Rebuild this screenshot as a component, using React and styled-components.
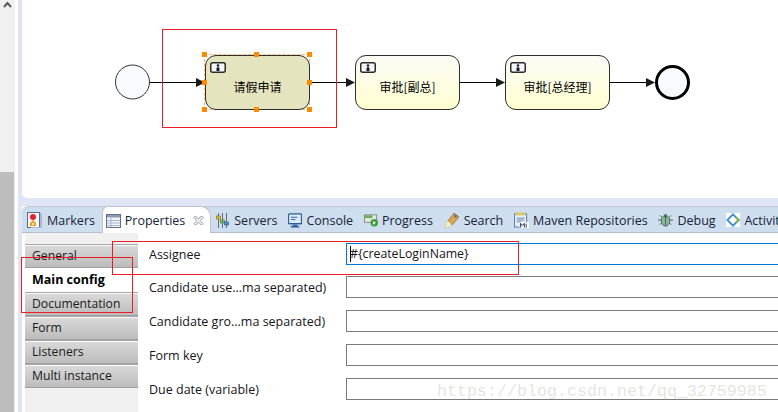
import React from 'react';
import styled, { createGlobalStyle } from 'styled-components';

const UI_FONT = `"Open Sans", "Noto Sans", "Noto Sans CJK SC", sans-serif`;

const GlobalStyle = createGlobalStyle`
  html, body { margin: 0; padding: 0; background: #ffffff; }
  * { box-sizing: border-box; }
`;

/* ---------- tab icons ---------- */
const MarkersIcon = () => (
  <svg width="16" height="17" viewBox="0 0 16 17">
    <rect x="0.5" y="0.5" width="12" height="15" fill="#f4f6fa" stroke="#5b6a8c" />
    <path d="M13 1h2v15H4v-1h9z" fill="#aeb9d2" />
    <circle cx="6" cy="5" r="3" fill="#e2242c" />
    <path d="M3 14v-3l3-3 3 3v3z" fill="#f0a020" />
    <rect x="5" y="11" width="2" height="2" fill="#fff3c0" />
  </svg>
);
const PropertiesIcon = () => (
  <svg width="15" height="14" viewBox="0 0 15 14">
    <rect x="0.5" y="0.5" width="14" height="13" fill="#f3f5f9" stroke="#5f6f90" />
    <rect x="1" y="1" width="13" height="2.5" fill="#8c9ab8" />
    <path d="M1 6.5h13M1 9h13M1 11.5h13M5 4v9" stroke="#a9b4ca" strokeWidth="1" />
  </svg>
);
const ServersIcon = () => (
  <svg width="14" height="15" viewBox="0 0 14 15">
    <path d="M2.5 0v15M6.5 0v15M10.5 0v15" stroke="#5f6b78" strokeWidth="1" />
    <rect x="0.5" y="3" width="4" height="3" fill="#e2b92c" stroke="#7a6a20" strokeWidth="0.6" />
    <rect x="4.5" y="7" width="4" height="3" fill="#7ab648" stroke="#48702a" strokeWidth="0.6" />
    <rect x="8.5" y="9" width="4" height="3" fill="#4b8ed0" stroke="#2a5a8c" strokeWidth="0.6" />
  </svg>
);
const ConsoleIcon = () => (
  <svg width="14" height="15" viewBox="0 0 15 15">
    <rect x="0.5" y="0.5" width="14" height="10.5" rx="1" fill="#dfe8f4" stroke="#2c5f9e" strokeWidth="1.4" />
    <path d="M3 4h7M3 6.5h5" stroke="#2c5f9e" strokeWidth="1" />
    <path d="M5 12h5v1.5h2V15H3v-1.500h2z" fill="#2c5f9e" />
  </svg>
);
const ProgressIcon = () => (
  <svg width="14" height="14" viewBox="0 0 15 14">
    <rect x="0.5" y="1.5" width="13" height="8" fill="#e4e8e4" stroke="#7f8a80" />
    <rect x="1" y="2" width="8" height="3" fill="#6fae55" />
    <circle cx="11" cy="10" r="4" fill="#3f9e3c" />
    <path d="M9.700 8l3 2-3 2z" fill="#ffffff" />
  </svg>
);
const SearchIcon = () => (
  <svg width="16" height="17" viewBox="0 0 16 17">
    <path d="M10 1l5 4-7 8-4-4z" fill="#d9a654" stroke="#94692c" strokeWidth="0.8" />
    <circle cx="11.500" cy="4" r="1.500" fill="#5b6f8c" />
    <path d="M4 9l4 4-2 2-5 1 1-5z" fill="#f4ecc0" stroke="#c8bf90" strokeWidth="0.6" />
  </svg>
);
const MavenIcon = () => (
  <svg width="15" height="17" viewBox="0 0 16 17">
    <rect x="0.5" y="1.500" width="13" height="14" fill="#e4ecf6" stroke="#5878a4" />
    <rect x="2" y="0" width="10" height="3" fill="#d9c95c" />
    <path d="M3 6h8M3 8h8M3 10h5" stroke="#6c88b0" strokeWidth="1" />
    <rect x="6" y="10.500" width="10" height="6" fill="#ffffff" />
    <path d="M7 16v-4.500l2 2.500 2-2.500V16M13 12v4" stroke="#24344c" strokeWidth="1" fill="none" />
  </svg>
);
const DebugIcon = () => (
  <svg width="15" height="16" viewBox="0 0 16 16">
    <path d="M2 3l3 3M14 3l-3 3M0 8h4M12 8h4M2 13l3-3M14 13l-3-3" stroke="#3c5a50" strokeWidth="1" />
    <ellipse cx="8" cy="9" rx="4.500" ry="5.500" fill="#8fb89a" stroke="#3f6a55" />
    <circle cx="8" cy="3.500" r="2" fill="#4d7a64" />
    <path d="M8 4v10" stroke="#2f5444" strokeWidth="0.8" />
  </svg>
);
const ActivitiIcon = () => (
  <svg width="14" height="16" viewBox="0 0 16 16">
    <rect width="16" height="16" fill="#ffffff" />
    <path d="M8 1.500L14.500 8 8 14.500 1.500 8z" fill="none" stroke="#3f8fd0" strokeWidth="2.200" />
    <path d="M11.500 5L14.500 8 11.500 11" fill="none" stroke="#78b84c" strokeWidth="2.200" />
  </svg>
);
const CloseGlyph = () => (
  <svg width="11" height="11" viewBox="0 0 11 11">
    <path
      d="M1 2.500L2.500 1 5.500 4 8.500 1 10 2.500 7 5.500 10 8.500 8.500 10 5.500 7 2.500 10 1 8.500 4 5.500z"
      fill="#ffffff"
      stroke="#8a8f98"
      strokeWidth="1"
    />
  </svg>
);

const tabs = [
  { label: 'Markers', Icon: MarkersIcon },
  { label: 'Properties', Icon: PropertiesIcon, active: true },
  { label: 'Servers', Icon: ServersIcon },
  { label: 'Console', Icon: ConsoleIcon },
  { label: 'Progress', Icon: ProgressIcon },
  { label: 'Search', Icon: SearchIcon },
  { label: 'Maven Repositories', Icon: MavenIcon },
  { label: 'Debug', Icon: DebugIcon },
  { label: 'Activiti', Icon: ActivitiIcon },
];

const sections = [
  { label: 'General' },
  { label: 'Main config', active: true },
  { label: 'Documentation' },
  { label: 'Form' },
  { label: 'Listeners' },
  { label: 'Multi instance' },
];

const fields = [
  { label: 'Assignee', value: '#{createLoginName}', focused: true },
  { label: 'Candidate use...ma separated)' },
  { label: 'Candidate gro...ma separated)' },
  { label: 'Form key' },
  { label: 'Due date (variable)' },
];

const handles = [
  [204, 54], [256, 54], [309, 54],
  [204, 82], [309, 82],
  [204, 109], [256, 109], [309, 109],
];

const TaskMarker = () => (
  <svg width="16" height="11" viewBox="0 0 16 11">
    <rect x="0.75" y="0.75" width="14.5" height="9.5" rx="2" fill="#f4f8fc" stroke="#2a2a2a" strokeWidth="1.5" />
    <circle cx="8" cy="3.500" r="1.300" fill="#1c1c1c" />
    <path d="M6.500 9V6l.8-.8h1.400l.8.8v3z" fill="#1c1c1c" />
  </svg>
);

const App = () => (
  <Page>
    <GlobalStyle />
    <ScrollRail>
      <ScrollUp>
        <svg width="9" height="7" viewBox="0 0 9 7">
          <path d="M1 6l3.500-4L8 6" fill="none" stroke="#5a5a5a" strokeWidth="2" />
        </svg>
      </ScrollUp>
      <ScrollThumb />
    </ScrollRail>

    <Workbench>
      <Canvas>
        <Wires width="756" height="198" viewBox="22 0 756 198">
          <circle cx="132.500" cy="82" r="17" fill="#f8faff" stroke="#333333" strokeWidth="1" />
          <circle cx="672.500" cy="82.500" r="16" fill="#f8faff" stroke="#000000" strokeWidth="3" />
          <path d="M150 82.500H198M310 82.500H348M459 82.500H498M609 82.500H648" stroke="#000000" strokeWidth="1" />
          <path d="M196 78l9 4.500-9 4.500zM346 78l9 4.500-9 4.500zM496 78l9 4.500-9 4.500zM646 78l9 4.500-9 4.500z" fill="#1a1a1a" />
        </Wires>

        <SelectionBox />
        <Task $x={205} $selected>
          <TaskIcon><TaskMarker /></TaskIcon>
          请假申请
        </Task>
        <Task $x={355}>
          <TaskIcon><TaskMarker /></TaskIcon>
          审批[副总]
        </Task>
        <Task $x={505}>
          <TaskIcon><TaskMarker /></TaskIcon>
          审批[总经理]
        </Task>
        {handles.map(([x, y]) => (
          <Handle key={`${x}-${y}`} $x={x} $y={y} />
        ))}
      </Canvas>

      <TabFolder>
        <TabBar>
          {tabs.map(({ label, Icon, active }) => (
            <Tab key={label} $active={active}>
              <Icon />
              <TabLabel>{label}</TabLabel>
              {active && <CloseSlot><CloseGlyph /></CloseSlot>}
            </Tab>
          ))}
        </TabBar>

        <Body>
          <Sidebar>
            {sections.map(({ label, active }) => (
              <SectionTab key={label} $active={active}>{label}</SectionTab>
            ))}
          </Sidebar>

          <Form>
            {fields.map(({ label, value, focused }) => (
              <FormRow key={label} $focused={focused}>
                <FieldLabel>{label}</FieldLabel>
                <Field $focused={focused}>
                  {focused && <Caret />}
                  {value}
                </Field>
              </FormRow>
            ))}
          </Form>
        </Body>
      </TabFolder>
    </Workbench>

    <Annotation $x={162} $y={29} $w={175} $h={99} />
    <Annotation $x={112} $y={241} $w={407} $h={34} />
    <Annotation $x={21} $y={257} $w={112} $h={56} />
    <Watermark>https://blog.csdn.net/qq_32759985</Watermark>
  </Page>
);

const Page = styled.div`
  position: relative;
  display: flex;
  width: 778px;
  height: 412px;
  overflow: hidden;
  background: #ffffff;
  font-family: ${UI_FONT};
`;

const ScrollRail = styled.div`
  display: flex;
  flex-direction: column;
  flex: none;
  width: 15px;
  margin-right: 3px;
  background: #f0f0f0;
`;

const ScrollUp = styled.div`
  display: flex;
  justify-content: center;
  align-items: flex-start;
  height: 172px;
  line-height: 0;
  padding-top: 1px;
`;

const ScrollThumb = styled.div`
  flex: 1;
  width: 14px;
  background: #bdbdbd;
`;

const Workbench = styled.div`
  flex: 1;
  min-width: 0;
  display: flex;
  flex-direction: column;
  padding-left: 4px;
  background: #dfe5f5;
`;

const Canvas = styled.div`
  position: relative;
  flex: none;
  height: 198px;
  margin-bottom: 8px;
  background: #ffffff;
  border-bottom-left-radius: 5px;
`;

const Wires = styled.svg`
  position: absolute;
  left: 0;
  top: 0;
`;

const SelectionBox = styled.div`
  position: absolute;
  left: 182px;
  top: 54px;
  width: 106px;
  height: 56px;
  border: 1px dashed #ffb874;
`;

const Task = styled.div`
  position: absolute;
  left: ${(p) => p.$x - 22}px;
  top: 55px;
  width: 105px;
  height: 55px;
  padding-top: 7px;
  display: flex;
  align-items: center;
  justify-content: center;
  border: 1px solid #2e2e2e;
  border-radius: 11px;
  background: ${(p) => (p.$selected ? '#e4e4bf' : 'linear-gradient(180deg, #fbfbf6 0%, #fffed0 100%)')};
  color: #000000;
  font-family: "Noto Sans CJK SC", sans-serif;
  font-size: 12px;
`;

const TaskIcon = styled.span`
  position: absolute;
  left: 4px;
  top: 6px;
  line-height: 0;
`;

const Handle = styled.span`
  position: absolute;
  left: ${(p) => p.$x - 24}px;
  top: ${(p) => p.$y - 2}px;
  width: 5px;
  height: 5px;
  background: #ff8a00;
`;

const TabFolder = styled.div`
  flex: 1;
  min-height: 0;
  display: flex;
  flex-direction: column;
  background: #ffffff;
`;

const TabBar = styled.div`
  flex: none;
  display: flex;
  height: 27px;
  border-top: 1px solid #c5c9d8;
  border-bottom: 1px solid #b7bdcb;
  border-top-left-radius: 6px;
  background: #cfdeee;
  white-space: nowrap;
`;

const Tab = styled.div`
  flex: none;
  display: flex;
  align-items: center;
  gap: 4px;
  height: 25px;
  padding: 1px 5.8px 0 5px;
  ${(p) =>
    p.$active &&
    `
    margin: -1px 0 -1px 1px;
    height: 27px;
    padding: 1px 6px 0 3px;
    background: #ffffff;
    border: 1px solid #bcc2cf;
    border-bottom: none;
    border-radius: 6px 10px 0 0;
  `}
  color: #15233a;
  font-size: 12.5px;
  line-height: 1;
  svg { flex: none; }
`;

const TabLabel = styled.span`
  display: block;
  padding-top: 2px;
`;

const CloseSlot = styled.span`
  display: flex;
  margin-left: 4px;
`;

const Body = styled.div`
  flex: 1;
  min-height: 0;
  display: flex;
  padding-left: 3px;
`;

const Sidebar = styled.div`
  flex: none;
  width: 113px;
  padding-top: 11px;
  background: #f0f0f0;
`;

const SectionTab = styled.div`
  display: flex;
  align-items: center;
  height: 24px;
  padding: 0 0 1px 7px;
  color: #1a1a1a;
  font-size: 12.2px;
  ${(p) =>
    p.$active
      ? `
    background: #ffffff;
    color: #000000;
    font-weight: 700;
    font-size: 12.5px;
  `
      : `
    background: linear-gradient(180deg, #dadada 0%, #bcbcbc 100%);
    border-top: 1px solid #a8a8a8;
    box-shadow: inset 0 1px 0 #f8f8f8;
    border-bottom: 1px solid #a0a0a0;
  `}
`;

const Form = styled.div`
  flex: 1;
  min-width: 0;
  display: flex;
  flex-direction: column;
  gap: 12px;
  padding: 10px 0 0 11px;
  overflow: hidden;
`;

const FormRow = styled.div`
  flex: none;
  display: flex;
  align-items: center;
  height: 22px;
  margin-bottom: ${(p) => (p.$focused ? '-1px' : '0')};
`;

const FieldLabel = styled.span`
  flex: none;
  width: 197px;
  color: #15151a;
  font-size: 12.5px;
  white-space: nowrap;
`;

const Field = styled.div`
  position: relative;
  flex: none;
  width: 440px;
  height: 22px;
  padding-left: 3px;
  line-height: 20px;
  border: 1px solid ${(p) => (p.$focused ? '#0078d7' : '#7a7a7a')};
  background: #ffffff;
  color: #15151a;
  font-size: 12.3px;
  white-space: nowrap;
`;

const Caret = styled.i`
  position: absolute;
  left: 3px;
  top: 2px;
  width: 1px;
  height: 16px;
  background: #000000;
`;

const Annotation = styled.div`
  position: absolute;
  left: ${(p) => p.$x}px;
  top: ${(p) => p.$y}px;
  width: ${(p) => p.$w}px;
  height: ${(p) => p.$h}px;
  border: 1px solid #ed1c24;
  pointer-events: none;
`;

const Watermark = styled.div`
  position: absolute;
  left: 437px;
  top: 382px;
  color: rgba(190, 190, 180, 0.42);
  font-family: "Liberation Mono", monospace;
  font-size: 16.67px;
  line-height: 20px;
  white-space: nowrap;
`;

export default App;
